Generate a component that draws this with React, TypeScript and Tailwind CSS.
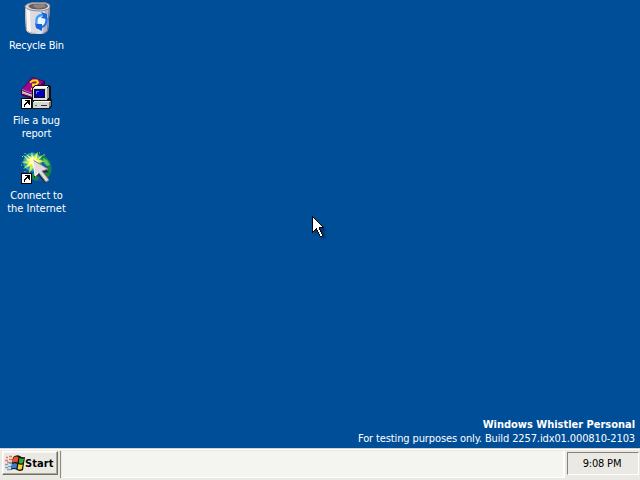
import React from "react";

const label =
  "font-['DejaVu_Sans_Condensed','DejaVu_Sans',sans-serif] [font-stretch:condensed] text-[11px] leading-[13px] text-white whitespace-nowrap";

function Shortcut() {
  return (
    <g shapeRendering="crispEdges">
      <path d="M0 21h11v11H0z" fill="#000" />
      <path d="M1 22h9v9H1z" fill="#fff" />
      <path d="M4 23h5v5h-1v-1h-1v-1h-1v1H5v1H4v2H3v-3h1v-1h1v-1h1v-1H4z" fill="#000" />
    </g>
  );
}

function RecycleBin() {
  return (
    <svg width="32" height="32" viewBox="0 0 32 32">
      <path d="M4 5l1 23q2 4 10 4h5q6-1 7-4l2-24z" fill="#dcdae3" />
      <path d="M4 5l1 23q2 3 5 3.500L9 8z" fill="#fbf6f2" />
      <path d="M24 7l5-3-2 24q-2 3-5 4z" fill="#b4b3cc" />
      <path d="M28.500 4l-2 24q-1 3-5 3.500" fill="none" stroke="#757492" />
      <path d="M4.500 5l1 23q2 3.500 10 3.500" fill="none" stroke="#b9a9a4" />
      <path d="M4 4.500Q5 1 14 .5h9q6 1 6 3.500 0 4-9 5Q6 9 4 4.500z" fill="#dddade" stroke="#8a8589" />
      <path d="M7 4q2-2.500 8-2.500h8q4 1 4 3-2 3-9 3Q9 7.500 7 4z" fill="#645f62" />
      <path d="M13 2.500l10-.5 2 3-8 1.500-5-2z" fill="#8b8587" />
      <circle cx="20.500" cy="19.500" r="6" fill="#edf4fc" />
      <g fill="none" strokeWidth="2.400">
        <path d="M15.500 21q-1-8 6-8" stroke="#38a0f5" />
        <path d="M25.500 16q1 8-6 9.500" stroke="#1b77e4" />
      </g>
      <path d="M20 10l6 2v5l-6-1 2-2zM21 22v7l-6-3-1-5 4 1z" fill="#1764d9" />
    </svg>
  );
}

function BugReport() {
  return (
    <svg width="32" height="32" viewBox="0 0 32 32">
      <path d="M0 13 11 0l13 4v6L12 23 0 18z" fill="#4b0047" />
      <path d="M1 12.500 11.500 1l11 3.500L12 16z" fill="#9d0a91" />
      <path d="M1 14l11 4v2L1 16.500z" fill="#f0e7ee" />
      <path d="M1 15.500l11 4" stroke="#967292" strokeWidth=".7" />
      <path d="M1 12.500l11 4" stroke="#df63cf" />
      <path d="M9 5.500l3-2h4l1 2-2 2h-3v2" fill="none" stroke="#ffe000" strokeWidth="2" />
      <path d="M10 11h2v2h-2z" fill="#ffe000" />
      <g shapeRendering="crispEdges">
        <path d="M11 11l3-3h14l2 2v11l-3 3H11z" fill="#111" />
        <path d="M12 11h14v12H12z" fill="#dedede" />
        <path d="M14 9h13l-1 2H12z" fill="#fff" />
        <path d="M26 11l2-2v11l-2 2z" fill="#999" />
        <path d="M13 12h11v9H13z" fill="#111" />
        <path d="M14 13h9v7h-9z" fill="#0000b8" />
        <path d="M15 14h3v1h-2v2h-1z" fill="#5484ff" />
        <path d="M11 25l2-2h15l2-2 1 2v6l-3 3H11z" fill="#171717" />
        <path d="M12 25h16v6H12z" fill="#d6d6d6" />
        <path d="M13 24h16v1H13z" fill="#fff" />
        <path d="M28 25l2-2v5l-2 2z" fill="#777" />
        <path d="M14 28h2v1h-2z" fill="#00b020" />
        <path d="M20 28h6v1h-6z" fill="#333" />
      </g>
      <Shortcut />
    </svg>
  );
}

function Internet() {
  return (
    <svg width="32" height="32" viewBox="0 0 32 32">
      <circle cx="18" cy="16" r="13" fill="#0d55ac" />
      <path d="M18 3q9 0 12 10l-2 2-4-2-4-4zM24 16l6-2q1 5-1 9l-4 5-3-5zM7 22l6-1 5 5-2 3q-6-2-9-7z" fill="#16853e" />
      <path d="M22 6l4 2 3 5-3 1-3-3z" fill="#64be67" />
      <circle cx="11.500" cy="10" r="9.500" fill="#28b9ca" opacity=".75" />
      <path d="M11 0l1 5 5-5-1 6 6-3-4 5 6 1-6 2 5 4-7-2 1 8-4-6-5 6 1-7-7 3 5-5-7-2 7-1-5-6 7 4z" fill="#d4ee44" />
      <path d="M12 2l1 5 4-4-2 5 6 1-5 1 3 4-5-2-1 5-2-5-5 2 3-5-6-1 6-1-4-5 6 4z" fill="#ffffad" />
      <path d="M13 10v16l4-3 7 8 4-2-7-8 7-1z" fill="#172c4a" />
      <path d="M12 8l2 17 4-4 7 9 3-2-7-9 6-2z" fill="#dfdcd9" />
      <path d="M12 8l15 9-6 2 7 9-3 2-7-9" fill="none" stroke="#947b8d" />
      <path d="M12 8l2 16 3-3" fill="none" stroke="#fff" />
      <path d="M1 4l1 1m-1 8H0M4 1v1M4 19v1M18 1h1M22 3h2" stroke="#a4db80" />
      <Shortcut />
    </svg>
  );
}

function WindowsFlag() {
  return (
    <svg width="20" height="17" viewBox="0 0 20 17">
      <g strokeWidth="1.300">
        <path d="M1 2.500h2M4 1.500h3M0 5.500h3M4 4.500h4M2 7.500h5" stroke="#e07867" />
        <path d="M0 9.500h3M4 8.500h3M0 12.500h3M3 11.500h4M2 14.500h4" stroke="#779fcd" />
      </g>
      <path d="M8 2q4-3 7-1 2 2 5 1l-2 13q-3 2-6 0-3-2-6 0z" fill="#111" />
      <path d="M8.500 2.500q3-2 5 0l-1 5q-2-1-5 0z" fill="#ed5025" />
      <path d="M14.500 2.800q2 1.500 4.500.7l-1 4.500q-2 1-4.200 0z" fill="#2fab3d" />
      <path d="M7.200 8.800q3-1.300 5 0l-.8 4.700q-2-1-5 0z" fill="#397fd3" />
      <path d="M13.400 9q2 1.300 4.400.4l-1 4.600q-2 1-4.200 0z" fill="#f6d52d" />
    </svg>
  );
}

const pointerRows = [
  "X",
  "XX",
  "X.X",
  "X..X",
  "X...X",
  "X....X",
  "X.....X",
  "X......X",
  "X.......X",
  "X........X",
  "X.........X",
  "X......XXXXX",
  "X...X..X",
  "X..XX..X",
  "X.X  X..X",
  "XX   X..X",
  "X     X..X",
  "      X..X",
  "       X..X",
  "       X..X",
  "        XX",
];

function Pointer() {
  return (
    <svg className="absolute top-[216px] left-[312px]" width="20" height="28" viewBox="0 0 20 28">
      <path d="M3 5v13l4-2 4 7 3-1-3-7h4z" fill="#001d44" opacity=".6" className="blur-[1px]" />
      {pointerRows.flatMap((row, y) =>
        row.split("").map((c, x) =>
          c === " " ? null : (
            <rect key={`${x}-${y}`} x={x} y={y} width="1" height="1" fill={c === "X" ? "#000" : "#fff"} />
          ),
        ),
      )}
    </svg>
  );
}

function DesktopIcon({ icon, lines }: { icon: React.ReactNode; lines: { text: string; spacing: string }[] }) {
  return (
    <div className="flex h-[75px] w-[73px] flex-col items-center">
      <div className="h-[37px] w-8">{icon}</div>
      {lines.map((l) => (
        <div key={l.text} className={`${label} ${l.spacing}`}>{l.text}</div>
      ))}
    </div>
  );
}

export default function App() {
  return (
    <div className="relative flex h-[480px] w-[640px] cursor-default flex-col overflow-hidden bg-[#004e98] select-none">
      <main className="flex flex-1 justify-between">
        <div className="flex flex-col pt-[2px]">
          <DesktopIcon icon={<RecycleBin />} lines={[{ text: "Recycle Bin", spacing: "tracking-[-0.2px]" }]} />
          <DesktopIcon
            icon={<BugReport />}
            lines={[
              { text: "File a bug", spacing: "tracking-[-0.05px]" },
              { text: "report", spacing: "tracking-[-0.1px]" },
            ]}
          />
          <DesktopIcon
            icon={<Internet />}
            lines={[
              { text: "Connect to", spacing: "tracking-[-0.15px]" },
              { text: "the Internet", spacing: "tracking-normal" },
            ]}
          />
        </div>
        <div className="flex flex-col items-end justify-end pr-[5px] pb-[3px]">
          <div className={`${label} mb-px font-bold tracking-[-0.02px]`}>Windows Whistler Personal</div>
          <div className={`${label} tracking-[-0.12px]`}>For testing purposes only. Build 2257.idx01.000810-2103</div>
        </div>
      </main>
      <footer className="flex h-8 border-t border-[#d6d3ce] bg-[#ebe9e3] pt-[2px] shadow-[inset_0_1px_#fff]">
        <div className="ml-[2px] flex h-[24px] w-[56px] items-center border border-t-white border-r-[#716f64] border-b-[#716f64] border-l-white pl-[2px] shadow-[inset_-1px_-1px_#aca899,inset_1px_1px_#f5f4ef]">
          <WindowsFlag />
          <span className="font-['DejaVu_Sans_Condensed','DejaVu_Sans',sans-serif] text-[11px] leading-[13px] font-bold tracking-[0.1px] text-black [font-stretch:condensed]">
            Start
          </span>
        </div>
        <div className="ml-[2px] h-[27px] w-px bg-[#8d8b84]" />
        <div className="ml-px h-[27px] w-[503px] border-r-2 border-b border-white bg-[#f4f4f1]" />
        <div className="mt-px ml-[2px] flex h-[23px] w-[72px] items-center justify-center border border-t-[#85837c] border-r-white border-b-white border-l-[#85837c] pr-[2px]">
          <span className="font-['DejaVu_Sans_Condensed','DejaVu_Sans',sans-serif] text-[11px] leading-[13px] tracking-[-0.2px] text-black [font-stretch:condensed]">
            9:08 PM
          </span>
        </div>
      </footer>
      <Pointer />
    </div>
  );
}
